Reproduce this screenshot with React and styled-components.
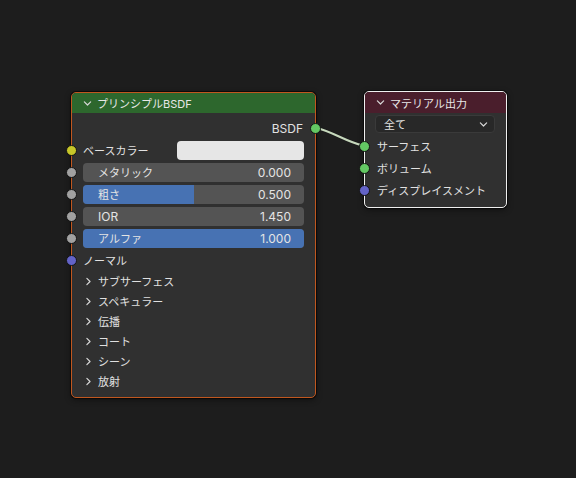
import React from "react";
import styled, { createGlobalStyle } from "styled-components";

const Global = createGlobalStyle`
  html, body {
    margin: 0;
    padding: 0;
    background: #1d1d1d;
  }
  body {
    font-family: "Inter", "Noto Sans CJK JP", sans-serif;
    font-size: 12px;
    color: #e2e2e2;
  }
`;

const Canvas = styled.div`
  position: relative;
  width: 576px;
  height: 478px;
  background: #1d1d1d;
  overflow: hidden;
`;

const Links = styled.svg`
  position: absolute;
  left: 0;
  top: 0;
  width: 576px;
  height: 478px;
  pointer-events: none;
  z-index: 2;
`;

const Node = styled.div`
  position: absolute;
  left: ${(p) => p.$x}px;
  top: ${(p) => p.$y}px;
  width: ${(p) => p.$w}px;
  box-sizing: border-box;
  background: #303030;
  border: 1px solid ${(p) => p.$outline};
  border-radius: 5px;
  box-shadow: 0 0 0 1px rgba(0, 0, 0, 0.55), 0 2px 6px rgba(0, 0, 0, 0.45);
  display: flex;
  flex-direction: column;
  padding-bottom: ${(p) => p.$pb}px;
`;

const Header = styled.div`
  height: ${(p) => p.$h}px;
  background: ${(p) => p.$bg};
  border-radius: 4px 4px 0 0;
  display: flex;
  align-items: center;
  padding-left: 11px;
  gap: 5px;
  color: #e8e8e8;
  font-size: 11px;
`;

const Chevron = styled.svg`
  width: 9px;
  height: 9px;
  flex: none;
`;

const Body = styled.div`
  display: flex;
  flex-direction: column;
  padding-top: ${(p) => p.$pt || 0}px;
`;

const Row = styled.div`
  position: relative;
  height: ${(p) => p.$h || 22}px;
  display: flex;
  align-items: center;
  justify-content: ${(p) => (p.$end ? "flex-end" : "flex-start")};
  padding: 0 ${(p) => p.$pr || 0}px 0 ${(p) => p.$pl || 0}px;
`;

const Socket = styled.span`
  position: absolute;
  top: 50%;
  ${(p) => (p.$side === "right" ? "right: -6px;" : "left: -6px;")}
  width: 9px;
  height: 9px;
  margin-top: -5px;
  border-radius: 50%;
  background: ${(p) => p.$color};
  border: 1px solid #141414;
  z-index: 3;
`;

const Label = styled.span`
  color: #e2e2e2;
  white-space: nowrap;
  font-size: ${(p) => (p.$latin ? 12 : 11)}px;
`;

const Swatch = styled.div`
  width: 127px;
  height: 19px;
  border-radius: 4px;
  background: #e6e6e6;
  margin-left: auto;
`;

const Slider = styled.div`
  position: relative;
  flex: 1;
  height: 19px;
  border-radius: 4px;
  background: #545454;
  overflow: hidden;
  display: flex;
  align-items: center;
  justify-content: space-between;
  padding: 0 13px 0 15px;
`;

const Fill = styled.div`
  position: absolute;
  left: 0;
  top: 0;
  bottom: 0;
  background: #4772b3;
`;

const SliderText = styled.span`
  position: relative;
  color: #e4e4e4;
  font-size: ${(p) => (p.$latin ? 12 : 11)}px;
`;

const Panel = styled.div`
  height: 20px;
  display: flex;
  align-items: center;
  gap: 5px;
  padding-left: 12px;
  color: #e0e0e0;
  font-size: 11px;
`;

const Dropdown = styled.div`
  flex: 1;
  height: 18px;
  box-sizing: border-box;
  border-radius: 4px;
  background: #282828;
  border: 1px solid #3a3a3a;
  display: flex;
  align-items: center;
  justify-content: space-between;
  padding: 0 6px 0 8px;
  color: #e4e4e4;
  font-size: 11px;
`;

const Down = () => (
  <Chevron viewBox="0 0 10 10">
    <path d="M1.5 3.2 L5 6.7 L8.5 3.2" fill="none" stroke="#d8d8d8" strokeWidth="1.3" strokeLinecap="round" strokeLinejoin="round" />
  </Chevron>
);

const Right = () => (
  <Chevron viewBox="0 0 10 10">
    <path d="M3.2 1.5 L6.7 5 L3.2 8.5" fill="none" stroke="#d8d8d8" strokeWidth="1.3" strokeLinecap="round" strokeLinejoin="round" />
  </Chevron>
);

const COLORS = {
  color: "#c7c729",
  float: "#a1a1a1",
  vector: "#6363c7",
  shader: "#63c763",
};

const sliders = [
  { label: "メタリック", value: "0.000", fill: 0 },
  { label: "粗さ", value: "0.500", fill: 0.5 },
  { label: "IOR", value: "1.450", fill: 0, latin: true },
  { label: "アルファ", value: "1.000", fill: 1 },
];

const panels = ["サブサーフェス", "スペキュラー", "伝播", "コート", "シーン", "放射"];

export default function App() {
  return (
    <>
      <Global />
      <Canvas>
        <Links viewBox="0 0 576 478">
          <path d="M314 127 C 336 133, 342 140, 364 146" fill="none" stroke="#1a1a1a" strokeWidth="3.5" />
          <path d="M314 127 C 336 133, 342 140, 364 146" fill="none" stroke="#c6d8bc" strokeWidth="2" />
        </Links>

        <Node $x={71} $y={92} $w={245} $outline="#c0571f" $pb={6}>
          <Header $h={20} $bg="#2d672d">
            <Down />
            <span>プリンシプルBSDF</span>
          </Header>
          <Body $pt={4}>
            <Row $end $pr={12}>
              <Label $latin>BSDF</Label>
              <Socket $side="right" $color={COLORS.shader} />
            </Row>
            <Row $pl={11} $pr={11}>
              <Socket $color={COLORS.color} />
              <Label>ベースカラー</Label>
              <Swatch />
            </Row>
            {sliders.map((s) => (
              <Row key={s.label} $pl={11} $pr={11}>
                <Socket $color={COLORS.float} />
                <Slider>
                  {s.fill > 0 && <Fill style={{ width: `${s.fill * 100}%` }} />}
                  <SliderText $latin={s.latin}>{s.label}</SliderText>
                  <SliderText $latin>{s.value}</SliderText>
                </Slider>
              </Row>
            ))}
            <Row $pl={11}>
              <Socket $color={COLORS.vector} />
              <Label>ノーマル</Label>
            </Row>
            {panels.map((p) => (
              <Panel key={p}>
                <Right />
                <span>{p}</span>
              </Panel>
            ))}
          </Body>
        </Node>

        <Node $x={364} $y={91} $w={143} $outline="#f0f0f0" $pb={6}>
          <Header $h={21} $bg="#4a1e2c">
            <Down />
            <span>マテリアル出力</span>
          </Header>
          <Body>
            <Row $h={22} $pl={10} $pr={11}>
              <Dropdown>
                <span>全て</span>
                <Down />
              </Dropdown>
            </Row>
            <Row $pl={12}>
              <Socket $color={COLORS.shader} />
              <Label>サーフェス</Label>
            </Row>
            <Row $pl={12}>
              <Socket $color={COLORS.shader} />
              <Label>ボリューム</Label>
            </Row>
            <Row $pl={12}>
              <Socket $color={COLORS.vector} />
              <Label>ディスプレイスメント</Label>
            </Row>
          </Body>
        </Node>
      </Canvas>
    </>
  );
}
